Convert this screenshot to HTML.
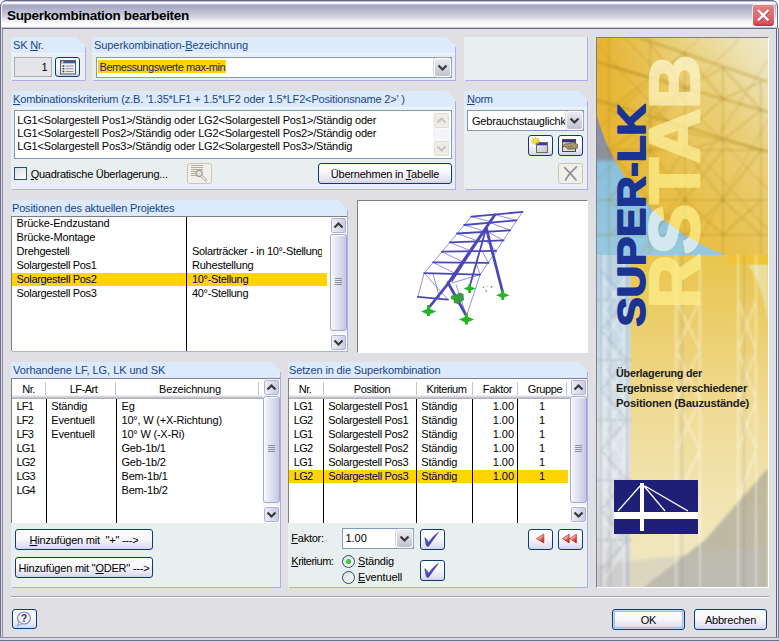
<!DOCTYPE html>
<html>
<head>
<meta charset="utf-8">
<title>Superkombination bearbeiten</title>
<style>
html,body{margin:0;padding:0;}
body{width:779px;height:641px;overflow:hidden;position:relative;background:#fff;font-family:"Liberation Sans",sans-serif;font-size:11px;color:#000;letter-spacing:-0.22px;}
*{box-sizing:border-box;}
.a{position:absolute;}
.t{white-space:nowrap;}
#win{position:absolute;left:0;top:0;width:779px;height:641px;background:#e0dfe3;overflow:hidden;}
#title{position:absolute;left:0;top:0;width:779px;height:29px;
 background:linear-gradient(to bottom,#5c5d7c 0,#5c5d7c 1px,#a0a1b8 1px,#ffffff 2.5px,#f2f2f7 3.5px,#c4c5d8 4.5px,#a6a7c2 5.5px,#a8a9c3 7px,#b8b9cc 10.5px,#c3c4d5 13.5px,#d1d2df 16.5px,#e4e4ec 19.5px,#f3f3f7 21.5px,#fbfbfd 23.5px,#ffffff 25px,#ffffff 27px,#c4c5d6 27.5px,#6c6d8c 28px,#6c6d8c 29px);}
#tt{left:7px;top:8px;font-weight:bold;font-size:13.5px;line-height:15px;color:#000;letter-spacing:-0.32px;white-space:nowrap;}
#close{position:absolute;left:753px;top:5px;width:21px;height:21px;border-radius:3px;background:linear-gradient(to bottom,#d0505a 0,#e8a090 1px,#e47a7c 2px,#df6c70 50%,#d6585e 85%,#b43040 100%);box-shadow:0 0 0 1px rgba(255,255,255,0.75);}
.bl{position:absolute;left:0;top:28px;width:3px;height:613px;background:linear-gradient(to right,#6e6f8a 0,#6e6f8a 1px,#d8d8e4 1px,#d8d8e4 2px,#8f90a8 2px,#8f90a8 3px);}
.br{position:absolute;left:776px;top:28px;width:3px;height:613px;background:linear-gradient(to right,#60617e 0,#60617e 1px,#e4e4ee 1px,#e4e4ee 2px,#7a7b96 2px,#7a7b96 3px);}
.bb{position:absolute;left:0;top:637px;width:779px;height:4px;background:linear-gradient(to top,#6e6f8a 0,#6e6f8a 1px,#d8d8e4 1px,#d8d8e4 3px,#8f90a8 3px,#8f90a8 4px);}
.grp{background:#e9efee;}
.gc{clip-path:polygon(0 0,calc(100% - 10px) 0,100% 10px,100% 100%,0 100%);}
.hd{background:#ddeafc;clip-path:polygon(0 0,calc(100% - 9px) 0,100% 9px,100% 100%,0 100%);}
.hdl{background:#f0f5fa;}
.hdt{color:#1a4684;line-height:17px;height:17px;white-space:nowrap;}
.gb{background:#adadf0;}
u{text-decoration:underline;}
.inp{background:#fff;border:1px solid #7f9db9;}
.btn{border:1px solid #0c3c78;border-radius:3px;background:linear-gradient(to bottom,#ffffff 0%,#f7f7fb 45%,#e4e2ef 85%,#d3cfe2 100%);text-align:center;white-space:nowrap;padding-top:1px;}
.dbtn{border-color:#c9c7ba;background:#f1f0ea;}
.lst{background:#fff;border-left:1px solid #808080;border-top:1px solid #808080;}
.sel{background:#ffd400;}
.seltx{color:#00007b;}
.vl{background:#000;}
.sb{background:#f4f4f9;}
.sbb{border:1px solid #fff;border-radius:3px;background:linear-gradient(to right,#f0f1fa,#c6c9e4);box-shadow:inset 0 0 0 1px #aeb1d0;}
.sbb.dis{background:#eeede5;border:1px solid #fbfbf8;box-shadow:inset 0 0 0 1px #e2e0d4;}
.thumb{border-radius:3px;background:linear-gradient(to right,#f8f8fd,#c4c7e4);border:1px solid #a3a7ca;box-shadow:inset 1px 1px 0 #fff;}
.cbb{border-radius:3px;border:1px solid #fff;background:linear-gradient(to bottom,#e9eaf2 0%,#d4d5e1 55%,#bfc0d0 100%);box-shadow:0 0 0 0.5px #b0b2c6;}
.chk{border:1px solid #1c5180;background:linear-gradient(135deg,#dcdcd7,#ffffff);}
.lh{background:linear-gradient(to bottom,#fff 0,#fff 16px,#eeeef3 16px,#eeeef3 17px,#dadae2 17px,#dadae2 18px,#c3c3ce 18px,#c3c3ce 19px,#b0b0be 19px,#b0b0be 20px);}
.hs{background:#c2c2d2;}
.rad{border-radius:50%;border:1px solid #1c5180;background:linear-gradient(135deg,#dcdcd7,#ffffff);}
.rad i{position:absolute;left:3px;top:3px;width:5px;height:5px;border-radius:50%;background:radial-gradient(circle at 40% 40%,#55d551,#21a121);}

</style>
</head>
<body>
<div id="win">
<div id="title"></div><div class="a" id="tt">Superkombination bearbeiten</div>
<div id="close"><svg width="21" height="21" viewBox="0 0 21 21" style="position:absolute;left:0;top:0"><path d="M5.500 5.500 L16 16 M16 5.500 L5.500 16" stroke="#5a2428" stroke-opacity="0.550" stroke-width="2.600"/><path d="M5 5 L15.500 15.500 M15.500 5 L5 15.500" stroke="#fff" stroke-width="2.300"/></svg></div>
<div class="bl"></div><div class="br"></div><div class="bb"></div>
<svg width="779" height="30" style="position:absolute;left:0;top:0"><path d="M0 0 H8 Q0 0 0 8 Z" fill="#fff"/><path d="M779 0 H770 Q778 0 778 8 V28 H779 Z" fill="#fff"/><path d="M0.500 28 V7 Q0.500 0.500 7 0.500 H771 Q777.500 0.500 777.500 7 V28" fill="none" stroke="#64658a" stroke-width="1"/><path d="M1.500 27 V7.500 Q1.500 2 7 2" fill="none" stroke="#fff" stroke-opacity="0.850" stroke-width="1"/><path d="M776.500 27 V7.500 Q776.500 2 771 2" fill="none" stroke="#fff" stroke-opacity="0.700" stroke-width="1"/></svg>
<div class="a grp gc" style="left:11px;top:37px;width:75px;height:44px;"></div>
<div class="a hd" style="left:11px;top:37px;width:74px;height:16px;"></div>
<div class="a hdl" style="left:11px;top:53px;width:74px;height:1px;"></div>
<div class="a hdt" style="left:13px;top:37px;letter-spacing:-0.18px;">SK <u>N</u>r.</div>
<div class="a gb" style="left:12px;top:80px;width:74px;height:1px;"></div>
<div class="a gb" style="left:85px;top:47px;width:1px;height:34px;"></div>
<div class="a " style="left:14px;top:57px;width:38px;height:20px;border:1px solid #adacb2;background:#e5e4e9;"></div>
<div class="a t " style="left:14px;top:60px;line-height:14px;height:14px;width:33.500px;text-align:right;">1</div>
<div class="a btn " style="left:55px;top:57px;width:25px;height:20px;line-height:18px;"><svg width="23" height="18" viewBox="0 0 23 18" style="position:absolute;left:0;top:0"><rect x="4.500" y="2.500" width="15" height="13.500" fill="#eeeef0" stroke="#5a5a5a"/><rect x="5" y="3" width="14" height="2.300" fill="#3c5c9c"/><rect x="5.500" y="3.300" width="1.800" height="1.500" fill="#fff"/><path d="M6.500 8h1.800M6.500 10.800h1.800M6.500 13.500h1.800" stroke="#2a3a6a" stroke-width="1.600"/><path d="M9.500 8h8M9.500 10.800h8M9.500 13.500h8" stroke="#8a92a6"/></svg></div>
<div class="a grp gc" style="left:92px;top:37px;width:364px;height:44px;"></div>
<div class="a hd" style="left:92px;top:37px;width:363px;height:16px;"></div>
<div class="a hdl" style="left:92px;top:53px;width:363px;height:1px;"></div>
<div class="a hdt" style="left:94px;top:37px;letter-spacing:-0.07px;">Superkombination-<u>B</u>ezeichnung</div>
<div class="a gb" style="left:93px;top:80px;width:363px;height:1px;"></div>
<div class="a gb" style="left:455px;top:47px;width:1px;height:34px;"></div>
<div class="a inp" style="left:96px;top:57px;width:356px;height:21px;"></div>
<div class="a cbb" style="left:434px;top:58px;width:17px;height:19px;"><svg width="15" height="17" style="position:absolute;left:0;top:0"><path d="M3.5 6.5 L7.5 10.5 L11.5 6.5" stroke="#383838" stroke-width="2.2" fill="none"/></svg></div>
<div class="a " style="left:98px;top:60px;width:128px;height:13px;background:#ffd400;"></div>
<div class="a t " style="left:99.5px;top:61px;line-height:13px;height:13px;letter-spacing:-0.44px;color:#1b1b8b;">Bemessungswerte max-min</div>
<div class="a grp" style="left:464px;top:37px;width:124px;height:44px;"></div>
<div class="a gb" style="left:465px;top:80px;width:123px;height:1px;"></div>
<div class="a gb" style="left:587px;top:37px;width:1px;height:44px;"></div>
<div class="a grp gc" style="left:11px;top:91px;width:445px;height:99px;"></div>
<div class="a hd" style="left:11px;top:91px;width:444px;height:16px;"></div>
<div class="a hdl" style="left:11px;top:107px;width:444px;height:1px;"></div>
<div class="a hdt" style="left:13px;top:91px;letter-spacing:-0.165px;"><u>K</u>ombinationskriterium (z.B. '1.35*LF1 + 1.5*LF2 oder 1.5*LF2&lt;Positionsname 2&gt;' )</div>
<div class="a gb" style="left:12px;top:189px;width:444px;height:1px;"></div>
<div class="a gb" style="left:455px;top:101px;width:1px;height:89px;"></div>
<div class="a inp" style="left:14px;top:110px;width:438px;height:49px;"></div>
<div class="a t " style="left:17.3px;top:113.6px;line-height:13px;height:13px;letter-spacing:-0.19px;">LG1&lt;Solargestell Pos1&gt;/Ständig oder LG2&lt;Solargestell Pos1&gt;/Ständig oder</div>
<div class="a t " style="left:17.3px;top:126.6px;line-height:13px;height:13px;letter-spacing:-0.19px;">LG1&lt;Solargestell Pos2&gt;/Ständig oder LG2&lt;Solargestell Pos2&gt;/Ständig oder</div>
<div class="a t " style="left:17.3px;top:139.6px;line-height:13px;height:13px;letter-spacing:-0.19px;">LG1&lt;Solargestell Pos3&gt;/Ständig oder LG2&lt;Solargestell Pos3&gt;/Ständig</div>
<div class="a sb" style="left:433px;top:112px;width:17px;height:45px;"></div>
<div class="a sbb dis" style="left:433px;top:112px;width:17px;height:17px;"><svg width="17" height="17" style="position:absolute;left:-1px;top:-1px"><path d="M4.5 10.5 L8.5 6.5 L12.5 10.5" stroke="#c9c7ba" stroke-width="2.2" fill="none"/></svg></div>
<div class="a sbb dis" style="left:433px;top:140px;width:17px;height:17px;"><svg width="17" height="17" style="position:absolute;left:-1px;top:-1px"><path d="M4.5 6.5 L8.5 10.5 L12.5 6.5" stroke="#c9c7ba" stroke-width="2.2" fill="none"/></svg></div>
<div class="a chk" style="left:14px;top:167px;width:13px;height:13px;"></div>
<div class="a t " style="left:30.7px;top:167px;line-height:14px;height:14px;letter-spacing:-0.26px;"><u>Q</u>uadratische Überlagerung...</div>
<div class="a btn dbtn" style="left:187px;top:163px;width:25px;height:21px;line-height:19px;"><svg width="23" height="19" viewBox="0 0 23 19" style="position:absolute;left:0;top:0"><path d="M3 1.500h12M3 3.500h12M3 5.500h12M3 7.500h5M3 9.500h4.500M3 11.500h5" stroke="#b3b09e"/><circle cx="11.200" cy="9.400" r="3.100" fill="#e4e4e0" stroke="#a4a49c" stroke-width="1.300"/><path d="M13.600 12 L17.800 16" stroke="#a8a8a4" stroke-width="2.600" stroke-linecap="round"/><path d="M13.800 12.200 L17.600 15.800" stroke="#fafafa" stroke-width="1.100" stroke-linecap="round"/></svg></div>
<div class="a btn " style="left:318px;top:163px;width:134px;height:21px;line-height:19px;">Übernehmen in <u>T</u>abelle</div>
<div class="a grp gc" style="left:464px;top:91px;width:124px;height:99px;"></div>
<div class="a hd" style="left:464px;top:91px;width:123px;height:16px;"></div>
<div class="a hdl" style="left:464px;top:107px;width:123px;height:1px;"></div>
<div class="a hdt" style="left:467px;top:91px;letter-spacing:-0.3px;"><u>N</u>orm</div>
<div class="a gb" style="left:465px;top:189px;width:123px;height:1px;"></div>
<div class="a gb" style="left:587px;top:101px;width:1px;height:89px;"></div>
<div class="a inp" style="left:467px;top:110px;width:117px;height:21px;"></div>
<div class="a cbb" style="left:566px;top:111px;width:17px;height:19px;"><svg width="15" height="17" style="position:absolute;left:0;top:0"><path d="M3.5 6.5 L7.5 10.5 L11.5 6.5" stroke="#383838" stroke-width="2.2" fill="none"/></svg></div>
<div class="a t" style="left:472px;top:115px;width:93px;height:13px;line-height:13px;overflow:hidden;letter-spacing:-0.19px;">Gebrauchstauglichkeit</div>
<div class="a btn " style="left:528px;top:135px;width:25px;height:21px;line-height:19px;"><svg width="23" height="19" viewBox="0 0 23 19" style="position:absolute;left:0;top:0"><defs><linearGradient id="wg" x1="0" y1="0" x2="1" y2="1"><stop offset="0" stop-color="#f0f0f0"/><stop offset="1" stop-color="#c4c4c4"/></linearGradient></defs><rect x="7.5" y="6.5" width="11" height="10" fill="url(#wg)" stroke="#6a6a6a"/><rect x="8" y="7" width="10" height="2.3" fill="#3838b4"/><path d="M6.5 1.2 L7.4 3.6 L9.6 2.2 L8.6 4.4 L11 5 L8.6 5.800 L9.6 8 L7.4 6.600 L6.5 9 L5.600 6.600 L3.400 8 L4.400 5.800 L2 5 L4.400 4.400 L3.400 2.200 L5.600 3.600 Z" fill="#f6e23a" stroke="#d8b400" stroke-width="0.5"/></svg></div>
<div class="a btn " style="left:558px;top:135px;width:25px;height:21px;line-height:19px;"><svg width="23" height="19" viewBox="0 0 23 19" style="position:absolute;left:0;top:0"><rect x="3.5" y="3.5" width="13" height="12" fill="#dcdcdc" stroke="#4a4a4a"/><rect x="4" y="4" width="12" height="2.300" fill="#30308c"/><path d="M4 9.500 C5 8,7 7.500,9 7.800 C11 6.500,14 6.300,16 7 L18.500 8.500 L18.500 12 L15 13 L10 13.200 C8 13,7.500 12,7.500 11 L4.500 10.800 Z" fill="#a89868" stroke="#5a5030" stroke-width="0.700"/><path d="M9 10.500 L12 12.500 M11 9.500 L14 11.500" stroke="#6a6040" stroke-width="0.600"/></svg></div>
<div class="a btn dbtn" style="left:558px;top:163px;width:25px;height:21px;line-height:19px;"><svg width="23" height="19" viewBox="0 0 23 19" style="position:absolute;left:0;top:0"><path d="M5.500 3.500 C9 7,13 11,17 16 M17.500 3 C13 7,9 11,6.500 16" stroke="#a2a2a8" stroke-width="1.900" fill="none" stroke-linecap="round"/><path d="M6 4 C9 7,13 11,16.500 15.500 M17 3.500 C13 7,9 11,7 15.500" stroke="#7c7c86" stroke-width="0.700" fill="none"/></svg></div>
<div class="a grp gc" style="left:11px;top:200px;width:337px;height:152px;"></div>
<div class="a hd" style="left:11px;top:200px;width:336px;height:16px;"></div>
<div class="a hdl" style="left:11px;top:216px;width:336px;height:1px;"></div>
<div class="a hdt" style="left:12px;top:200px;letter-spacing:-0.17px;">Positionen des aktuellen Projektes</div>
<div class="a gb" style="left:12px;top:351px;width:336px;height:1px;"></div>
<div class="a gb" style="left:347px;top:210px;width:1px;height:142px;"></div>
<div class="a lst" style="left:11px;top:216px;width:336px;height:135px;"></div>
<div class="a sel" style="left:12px;top:273px;width:315px;height:13px;"></div>
<div class="a t " style="left:16.5px;top:217px;line-height:13px;height:13px;letter-spacing:-0.18px;">Brücke-Endzustand</div>
<div class="a t " style="left:16.5px;top:231px;line-height:13px;height:13px;letter-spacing:-0.14px;">Brücke-Montage</div>
<div class="a t " style="left:16.5px;top:245px;line-height:13px;height:13px;letter-spacing:-0.24px;">Drehgestell</div>
<div class="a t " style="left:16.5px;top:259px;line-height:13px;height:13px;letter-spacing:-0.33px;">Solargestell Pos1</div>
<div class="a t seltx" style="left:16.5px;top:273px;line-height:13px;height:13px;letter-spacing:-0.33px;">Solargestell Pos2</div>
<div class="a t " style="left:16.5px;top:287px;line-height:13px;height:13px;letter-spacing:-0.33px;">Solargestell Pos3</div>
<div class="a vl" style="left:186px;top:217px;width:1px;height:134px;"></div>
<div class="a" style="left:192px;top:217px;width:130px;height:134px;overflow:hidden;">
<div class="a t " style="left:0;top:28px;line-height:13px;letter-spacing:-0.32px;">Solarträcker - in 10°-Stellung</div>
<div class="a t " style="left:0;top:42px;line-height:13px;letter-spacing:-0.23px;">Ruhestellung</div>
<div class="a t seltx" style="left:0;top:56px;line-height:13px;letter-spacing:-0.32px;">10°-Stellung</div>
<div class="a t " style="left:0;top:70px;line-height:13px;letter-spacing:-0.32px;">40°-Stellung</div>
</div>
<div class="a sb" style="left:330px;top:217px;width:17px;height:134px;"></div>
<div class="a sbb" style="left:330px;top:217px;width:17px;height:17px;"><svg width="17" height="17" style="position:absolute;left:-1px;top:-1px"><path d="M4.5 10.5 L8.5 6.5 L12.5 10.5" stroke="#383838" stroke-width="2.2" fill="none"/></svg></div>
<div class="a sbb" style="left:330px;top:334px;width:17px;height:17px;"><svg width="17" height="17" style="position:absolute;left:-1px;top:-1px"><path d="M4.5 6.5 L8.5 10.5 L12.5 6.5" stroke="#383838" stroke-width="2.2" fill="none"/></svg></div>
<div class="a thumb" style="left:330px;top:234px;width:17px;height:97px;"><svg width="15" height="8" style="position:absolute;left:0;top:43px"><path d="M4 0.5h7M4 2.5h7M4 4.5h7M4 6.5h7" stroke="#8d8ea3"/></svg></div>
<div class="a " style="left:357px;top:200px;width:231px;height:153px;background:#fff;border-top:1px solid #808080;border-left:1px solid #808080;border-right:1px solid #fff;border-bottom:1px solid #fff;"><svg width="229" height="151" viewBox="358 201 229 151" style="position:absolute;left:0;top:0;display:block">
 <g stroke="#4a47b8" fill="none" stroke-linecap="round">
  <g stroke-width="0.7" stroke-opacity="0.85">
   <path d="M471.3 216.6 L424.2 273.1 L417.8 296.8 M522.5 211.9 L480.1 274.6 L466.5 316"/>
   <path d="M471.3 216.6 L490 221.5 M464.2 225 L484 231 M457 233.500 L478 241 M449.800 242.300 L471 251 M442 251.700 L464 262.500 M433.100 262.300 L456 274"/>
   <path d="M494.700 214.500 L516.300 220.400 M490 222.500 L510.200 230.400 M486 231 L503.500 240.400 M486 241 L496.300 250.800 M482 251 L488.600 262.800 M476 262.600 L480.100 274.600"/>
   <path d="M424.200 273.100 L448 299.700 M433 274 L440 299 M480.100 274.600 L452 283 M456.200 285 L466.500 316"/>
  </g>
  <g stroke-width="1.800">
   <path d="M471.300 216.600 L522.500 211.900 M464.200 225 L516.300 220.400 M457 233.500 L510.200 230.400 M449.800 242.300 L503.500 240.400 M442 251.700 L496.300 250.800 M433.100 262.300 L488.600 262.800 M424.200 273.100 L480.100 274.600"/>
   <path d="M417.800 296.800 L448 299.700"/>
   <path d="M486.300 228.100 L469.500 287"/>
  </g>
  <g stroke-width="2.800">
   <path d="M494.700 215 L447 285 L428.600 308"/>
   <path d="M486.300 228.100 L502.600 292"/>
   <path d="M448 282.700 L466.500 316"/>
  </g>
  <path d="M486.300 228.100 L452 281" stroke-width="1.600"/>
 </g>
 <g fill="#22b522" stroke="none">
  <path d="M421 311.500 L428.600 308.300 L436.200 311.500 L428.600 314.700 Z M427.100 305 h3 v11 h-3 Z"/>
  <path d="M458.900 319.500 L466.500 316.300 L474.100 319.500 L466.500 322.700 Z M465 313.500 h3 v11 h-3 Z"/>
  <path d="M463.600 288.600 L469.600 286 L475.600 288.600 L469.600 291.200 Z M468.300 284 h2.600 v9 h-2.600 Z"/>
  <path d="M496 295.300 L502.800 292.500 L509.600 295.300 L502.800 298.100 Z M501.400 290 h2.800 v10 h-2.800 Z"/>
 </g>
 <path d="M453 296 L460 292.500 L463.500 294 L464 300 L458 304 L454 303 Z" fill="#3c9a48"/>
 <circle cx="453" cy="297.500" r="2.200" fill="#22b522"/>
 <circle cx="483.500" cy="287.300" r="0.800" fill="#30b030"/><circle cx="491.500" cy="286.800" r="0.900" fill="#e05030"/><circle cx="487" cy="286.500" r="0.700" fill="#c8c040"/><circle cx="486.300" cy="291" r="0.800" fill="#3060e0"/>
</svg>
</div>
<div class="a grp gc" style="left:11px;top:362px;width:270px;height:226px;"></div>
<div class="a hd" style="left:11px;top:362px;width:269px;height:16px;"></div>
<div class="a hdl" style="left:11px;top:378px;width:269px;height:1px;"></div>
<div class="a hdt" style="left:13px;top:362px;letter-spacing:-0.04px;">Vorhandene LF, LG, LK und SK</div>
<div class="a gb" style="left:12px;top:587px;width:269px;height:1px;"></div>
<div class="a gb" style="left:280px;top:372px;width:1px;height:216px;"></div>
<div class="a lst" style="left:11px;top:378px;width:269px;height:145px;"></div>
<div class="a lh" style="left:12px;top:379px;width:251px;height:20px;"></div>
<div class="a t" style="left:12px;top:382px;width:33px;text-align:center;line-height:14px;letter-spacing:-0.5px;">Nr.</div>
<div class="a hs" style="left:45px;top:382px;width:1px;height:13px;"></div>
<div class="a t" style="left:49px;top:382px;width:69px;text-align:center;line-height:14px;letter-spacing:-0.5px;">LF-Art</div>
<div class="a hs" style="left:115px;top:382px;width:1px;height:13px;"></div>
<div class="a t" style="left:119px;top:382px;width:142px;text-align:center;line-height:14px;letter-spacing:-0.15px;">Bezeichnung</div>
<div class="a hs" style="left:258px;top:382px;width:1px;height:13px;"></div>
<div class="a vl" style="left:46px;top:399px;width:1px;height:124px;"></div>
<div class="a vl" style="left:116px;top:399px;width:1px;height:124px;"></div>
<div class="a t " style="left:16.5px;top:400px;line-height:13px;height:13px;letter-spacing:-0.8px;">LF1</div>
<div class="a t " style="left:51.3px;top:400px;line-height:13px;height:13px;letter-spacing:-0.2px;">Ständig</div>
<div class="a t " style="left:121.5px;top:400px;line-height:13px;height:13px;letter-spacing:-0.2px;">Eg</div>
<div class="a t " style="left:16.5px;top:414px;line-height:13px;height:13px;letter-spacing:-0.8px;">LF2</div>
<div class="a t " style="left:51.3px;top:414px;line-height:13px;height:13px;letter-spacing:-0.2px;">Eventuell</div>
<div class="a t " style="left:121.5px;top:414px;line-height:13px;height:13px;letter-spacing:-0.2px;">10°, W (+X-Richtung)</div>
<div class="a t " style="left:16.5px;top:428px;line-height:13px;height:13px;letter-spacing:-0.8px;">LF3</div>
<div class="a t " style="left:51.3px;top:428px;line-height:13px;height:13px;letter-spacing:-0.2px;">Eventuell</div>
<div class="a t " style="left:121.5px;top:428px;line-height:13px;height:13px;letter-spacing:-0.2px;">10° W (-X-Ri)</div>
<div class="a t " style="left:16.5px;top:442px;line-height:13px;height:13px;letter-spacing:-0.8px;">LG1</div>
<div class="a t " style="left:121.5px;top:442px;line-height:13px;height:13px;letter-spacing:-0.2px;">Geb-1b/1</div>
<div class="a t " style="left:16.5px;top:456px;line-height:13px;height:13px;letter-spacing:-0.8px;">LG2</div>
<div class="a t " style="left:121.5px;top:456px;line-height:13px;height:13px;letter-spacing:-0.2px;">Geb-1b/2</div>
<div class="a t " style="left:16.5px;top:470px;line-height:13px;height:13px;letter-spacing:-0.8px;">LG3</div>
<div class="a t " style="left:121.5px;top:470px;line-height:13px;height:13px;letter-spacing:-0.2px;">Bem-1b/1</div>
<div class="a t " style="left:16.5px;top:484px;line-height:13px;height:13px;letter-spacing:-0.8px;">LG4</div>
<div class="a t " style="left:121.5px;top:484px;line-height:13px;height:13px;letter-spacing:-0.2px;">Bem-1b/2</div>
<div class="a sb" style="left:263px;top:379px;width:17px;height:144px;"></div>
<div class="a sbb" style="left:263px;top:379px;width:17px;height:17px;"><svg width="17" height="17" style="position:absolute;left:-1px;top:-1px"><path d="M4.5 10.5 L8.5 6.5 L12.5 10.5" stroke="#383838" stroke-width="2.2" fill="none"/></svg></div>
<div class="a sbb" style="left:263px;top:506px;width:17px;height:17px;"><svg width="17" height="17" style="position:absolute;left:-1px;top:-1px"><path d="M4.5 6.5 L8.5 10.5 L12.5 6.5" stroke="#383838" stroke-width="2.2" fill="none"/></svg></div>
<div class="a thumb" style="left:263px;top:396px;width:17px;height:107px;"><svg width="15" height="8" style="position:absolute;left:0;top:48px"><path d="M4 0.5h7M4 2.5h7M4 4.5h7M4 6.5h7" stroke="#8d8ea3"/></svg></div>
<div class="a btn " style="left:15px;top:529px;width:138px;height:21px;line-height:19px;"><u>H</u>inzufügen mit &nbsp;"+" ---&gt;</div>
<div class="a btn " style="left:15px;top:557px;width:138px;height:21px;line-height:19px;">Hinzufügen mit "<u>O</u>DER" ---&gt;</div>
<div class="a grp gc" style="left:288px;top:362px;width:300px;height:226px;"></div>
<div class="a hd" style="left:288px;top:362px;width:299px;height:16px;"></div>
<div class="a hdl" style="left:288px;top:378px;width:299px;height:1px;"></div>
<div class="a hdt" style="left:289px;top:362px;letter-spacing:-0.13px;">Setzen in die Superkombination</div>
<div class="a gb" style="left:289px;top:587px;width:299px;height:1px;"></div>
<div class="a gb" style="left:587px;top:372px;width:1px;height:216px;"></div>
<div class="a lst" style="left:288px;top:378px;width:299px;height:145px;"></div>
<div class="a lh" style="left:289px;top:379px;width:281px;height:20px;"></div>
<div class="a t" style="left:288px;top:382px;width:34px;text-align:center;line-height:14px;letter-spacing:-0.5px;">Nr.</div>
<div class="a hs" style="left:323px;top:382px;width:1px;height:13px;"></div>
<div class="a t" style="left:326px;top:382px;width:92px;text-align:center;line-height:14px;letter-spacing:-0.3px;">Position</div>
<div class="a hs" style="left:416px;top:382px;width:1px;height:13px;"></div>
<div class="a t" style="left:419px;top:382px;width:55px;text-align:center;line-height:14px;letter-spacing:-0.45px;">Kriterium</div>
<div class="a hs" style="left:472px;top:382px;width:1px;height:13px;"></div>
<div class="a t" style="left:475.5px;top:382px;width:44px;text-align:center;line-height:14px;letter-spacing:-0.32px;">Faktor</div>
<div class="a hs" style="left:517px;top:382px;width:1px;height:13px;"></div>
<div class="a t" style="left:521px;top:382px;width:48px;text-align:center;line-height:14px;letter-spacing:-0.4px;">Gruppe</div>
<div class="a hs" style="left:566px;top:382px;width:1px;height:13px;"></div>
<div class="a sel" style="left:289px;top:470px;width:279px;height:13px;"></div>
<div class="a vl" style="left:323px;top:399px;width:1px;height:124px;"></div>
<div class="a vl" style="left:416px;top:399px;width:1px;height:124px;"></div>
<div class="a vl" style="left:472px;top:399px;width:1px;height:124px;"></div>
<div class="a vl" style="left:517px;top:399px;width:1px;height:124px;"></div>
<div class="a t " style="left:293.8px;top:400px;line-height:13px;height:13px;letter-spacing:-0.7px;">LG1</div>
<div class="a t " style="left:328.3px;top:400px;line-height:13px;height:13px;letter-spacing:-0.33px;">Solargestell Pos1</div>
<div class="a t " style="left:421.3px;top:400px;line-height:13px;height:13px;letter-spacing:-0.22px;">Ständig</div>
<div class="a t " style="left:480px;top:400px;line-height:13px;height:13px;letter-spacing:-0.04px;width:34px;text-align:right;">1.00</div>
<div class="a t " style="left:532px;top:400px;line-height:13px;height:13px;width:20px;text-align:center;">1</div>
<div class="a t " style="left:293.8px;top:414px;line-height:13px;height:13px;letter-spacing:-0.7px;">LG2</div>
<div class="a t " style="left:328.3px;top:414px;line-height:13px;height:13px;letter-spacing:-0.33px;">Solargestell Pos1</div>
<div class="a t " style="left:421.3px;top:414px;line-height:13px;height:13px;letter-spacing:-0.22px;">Ständig</div>
<div class="a t " style="left:480px;top:414px;line-height:13px;height:13px;letter-spacing:-0.04px;width:34px;text-align:right;">1.00</div>
<div class="a t " style="left:532px;top:414px;line-height:13px;height:13px;width:20px;text-align:center;">1</div>
<div class="a t " style="left:293.8px;top:428px;line-height:13px;height:13px;letter-spacing:-0.7px;">LG1</div>
<div class="a t " style="left:328.3px;top:428px;line-height:13px;height:13px;letter-spacing:-0.33px;">Solargestell Pos2</div>
<div class="a t " style="left:421.3px;top:428px;line-height:13px;height:13px;letter-spacing:-0.22px;">Ständig</div>
<div class="a t " style="left:480px;top:428px;line-height:13px;height:13px;letter-spacing:-0.04px;width:34px;text-align:right;">1.00</div>
<div class="a t " style="left:532px;top:428px;line-height:13px;height:13px;width:20px;text-align:center;">1</div>
<div class="a t " style="left:293.8px;top:442px;line-height:13px;height:13px;letter-spacing:-0.7px;">LG2</div>
<div class="a t " style="left:328.3px;top:442px;line-height:13px;height:13px;letter-spacing:-0.33px;">Solargestell Pos2</div>
<div class="a t " style="left:421.3px;top:442px;line-height:13px;height:13px;letter-spacing:-0.22px;">Ständig</div>
<div class="a t " style="left:480px;top:442px;line-height:13px;height:13px;letter-spacing:-0.04px;width:34px;text-align:right;">1.00</div>
<div class="a t " style="left:532px;top:442px;line-height:13px;height:13px;width:20px;text-align:center;">1</div>
<div class="a t " style="left:293.8px;top:456px;line-height:13px;height:13px;letter-spacing:-0.7px;">LG1</div>
<div class="a t " style="left:328.3px;top:456px;line-height:13px;height:13px;letter-spacing:-0.33px;">Solargestell Pos3</div>
<div class="a t " style="left:421.3px;top:456px;line-height:13px;height:13px;letter-spacing:-0.22px;">Ständig</div>
<div class="a t " style="left:480px;top:456px;line-height:13px;height:13px;letter-spacing:-0.04px;width:34px;text-align:right;">1.00</div>
<div class="a t " style="left:532px;top:456px;line-height:13px;height:13px;width:20px;text-align:center;">1</div>
<div class="a t seltx" style="left:293.8px;top:470px;line-height:13px;height:13px;letter-spacing:-0.7px;">LG2</div>
<div class="a t seltx" style="left:328.3px;top:470px;line-height:13px;height:13px;letter-spacing:-0.33px;">Solargestell Pos3</div>
<div class="a t seltx" style="left:421.3px;top:470px;line-height:13px;height:13px;letter-spacing:-0.22px;">Ständig</div>
<div class="a t seltx" style="left:480px;top:470px;line-height:13px;height:13px;letter-spacing:-0.04px;width:34px;text-align:right;">1.00</div>
<div class="a t seltx" style="left:532px;top:470px;line-height:13px;height:13px;width:20px;text-align:center;">1</div>
<div class="a sb" style="left:570px;top:379px;width:17px;height:144px;"></div>
<div class="a sbb" style="left:570px;top:379px;width:17px;height:17px;"><svg width="17" height="17" style="position:absolute;left:-1px;top:-1px"><path d="M4.5 10.5 L8.5 6.5 L12.5 10.5" stroke="#383838" stroke-width="2.2" fill="none"/></svg></div>
<div class="a sbb" style="left:570px;top:506px;width:17px;height:17px;"><svg width="17" height="17" style="position:absolute;left:-1px;top:-1px"><path d="M4.5 6.5 L8.5 10.5 L12.5 6.5" stroke="#383838" stroke-width="2.2" fill="none"/></svg></div>
<div class="a thumb" style="left:570px;top:396px;width:17px;height:107px;"><svg width="15" height="8" style="position:absolute;left:0;top:48px"><path d="M4 0.5h7M4 2.5h7M4 4.5h7M4 6.5h7" stroke="#8d8ea3"/></svg></div>
<div class="a t " style="left:291.3px;top:531px;line-height:14px;height:14px;letter-spacing:-0.25px;"><u>F</u>aktor:</div>
<div class="a inp" style="left:342px;top:528px;width:72px;height:21px;"></div>
<div class="a cbb" style="left:396px;top:529px;width:17px;height:19px;"><svg width="15" height="17" style="position:absolute;left:0;top:0"><path d="M3.5 6.5 L7.5 10.5 L11.5 6.5" stroke="#383838" stroke-width="2.2" fill="none"/></svg></div>
<div class="a t " style="left:345.5px;top:531px;line-height:14px;height:14px;letter-spacing:-0.04px;">1.00</div>
<div class="a btn " style="left:420px;top:529px;width:25px;height:21px;line-height:19px;"><svg width="23" height="19" viewBox="0 0 23 19" style="position:absolute;left:0;top:0"><defs><linearGradient id="ck" x1="0" y1="0" x2="1" y2="1"><stop offset="0" stop-color="#7f86e6"/><stop offset="0.5" stop-color="#4a4cc4"/><stop offset="1" stop-color="#1c1c78"/></linearGradient></defs><path d="M3.800 7.600 C5.200 8.200,6.800 10.500,7.600 12.600 C10 8.500,13.500 4.800,17.500 2.200 C14.500 6.500,10.500 12,7.600 16.200 C6.800 16.800,5.800 16.500,5.300 15.500 C4.600 13,4 10,3.800 7.600 Z" fill="url(#ck)" stroke="#23237c" stroke-width="0.400"/></svg></div>
<div class="a t " style="left:291.3px;top:554px;line-height:14px;height:14px;letter-spacing:-0.5px;"><u>K</u>riterium:</div>
<div class="a rad" style="left:342px;top:555px;width:13px;height:13px;"><i></i></div>
<div class="a t " style="left:358px;top:554px;line-height:14px;height:14px;letter-spacing:-0.2px;"><u>S</u>tändig</div>
<div class="a rad" style="left:342px;top:571px;width:13px;height:13px;"></div>
<div class="a t " style="left:358px;top:570px;line-height:14px;height:14px;letter-spacing:-0.14px;"><u>E</u>ventuell</div>
<div class="a btn " style="left:420px;top:560px;width:25px;height:21px;line-height:19px;"><svg width="23" height="19" viewBox="0 0 23 19" style="position:absolute;left:0;top:0"><defs><linearGradient id="ck" x1="0" y1="0" x2="1" y2="1"><stop offset="0" stop-color="#7f86e6"/><stop offset="0.5" stop-color="#4a4cc4"/><stop offset="1" stop-color="#1c1c78"/></linearGradient></defs><path d="M3.800 7.600 C5.200 8.200,6.800 10.500,7.600 12.600 C10 8.500,13.500 4.800,17.500 2.200 C14.500 6.500,10.500 12,7.600 16.200 C6.800 16.800,5.800 16.500,5.300 15.500 C4.600 13,4 10,3.800 7.600 Z" fill="url(#ck)" stroke="#23237c" stroke-width="0.400"/></svg></div>
<div class="a btn " style="left:528px;top:529px;width:25px;height:21px;line-height:19px;"><svg width="23" height="19" viewBox="0 0 23 19" style="position:absolute;left:0;top:0"><defs><linearGradient id="tg" x1="0" y1="0" x2="0.6" y2="1"><stop offset="0" stop-color="#e86868"/><stop offset="0.38" stop-color="#fde0d8"/><stop offset="0.62" stop-color="#ee7468"/><stop offset="1" stop-color="#b42828"/></linearGradient></defs><path d="M14.8 4.100 L7.4 8.600 L14.8 12.900 Z" fill="url(#tg)" stroke="#a03024" stroke-width="0.700" stroke-linejoin="round"/></svg></div>
<div class="a btn " style="left:558px;top:529px;width:25px;height:21px;line-height:19px;"><svg width="23" height="19" viewBox="0 0 23 19" style="position:absolute;left:0;top:0"><defs><linearGradient id="tg" x1="0" y1="0" x2="0.6" y2="1"><stop offset="0" stop-color="#e86868"/><stop offset="0.38" stop-color="#fde0d8"/><stop offset="0.62" stop-color="#ee7468"/><stop offset="1" stop-color="#b42828"/></linearGradient></defs><path d="M10.2 4.100 L3.4 8.600 L10.2 12.900 Z" fill="url(#tg)" stroke="#a03024" stroke-width="0.700" stroke-linejoin="round"/><path d="M17.4 4.100 L10.6 8.600 L17.4 12.900 Z" fill="url(#tg)" stroke="#a03024" stroke-width="0.700" stroke-linejoin="round"/></svg></div>
<div class="a " style="left:596px;top:37px;width:173px;height:551px;overflow:hidden;border-top:1px solid #7d7d8c;border-left:1px solid #7d7d8c;border-right:1px solid #fff;border-bottom:1px solid #fff;"><svg width="171" height="550" viewBox="597 38 171 550" style="position:absolute;left:0;top:0;display:block">
 <defs>
  <linearGradient id="gGold" x1="0" y1="1" x2="1" y2="0"><stop offset="0" stop-color="#e8bc3a"/><stop offset="0.4" stop-color="#e8c04a"/><stop offset="0.72" stop-color="#ead07a"/><stop offset="0.9" stop-color="#ece2b4"/><stop offset="1" stop-color="#eee8c8"/></linearGradient>
  <linearGradient id="gGoldL" x1="0" y1="0" x2="1" y2="0"><stop offset="0" stop-color="#e6b22e" stop-opacity="0.9"/><stop offset="0.45" stop-color="#e6b432" stop-opacity="0"/></linearGradient>
  <linearGradient id="gLow" x1="0" y1="0" x2="0" y2="1"><stop offset="0" stop-color="#e8c54c"/><stop offset="0.25" stop-color="#ecd072"/><stop offset="0.5" stop-color="#f0dc98"/><stop offset="0.8" stop-color="#f2e6b8"/><stop offset="1" stop-color="#eee6c2"/></linearGradient>
  <linearGradient id="gLeft" x1="0" y1="0" x2="0" y2="1"><stop offset="0" stop-color="#b8d2e4"/><stop offset="0.25" stop-color="#c8dae6"/><stop offset="0.6" stop-color="#dde2e6"/><stop offset="1" stop-color="#d6d6d6"/></linearGradient>
  <linearGradient id="gBlue" x1="0" y1="0" x2="0" y2="1"><stop offset="0" stop-color="#8e8f9e"/><stop offset="0.3" stop-color="#8c92a4"/><stop offset="0.335" stop-color="#88c0de"/><stop offset="1" stop-color="#96c8e2"/></linearGradient>
  <linearGradient id="gTx" gradientUnits="userSpaceOnUse" x1="0" y1="0" x2="254" y2="0"><stop offset="0" stop-color="#fff08c"/><stop offset="0.55" stop-color="#fff08c"/><stop offset="0.85" stop-color="#fff6c4"/><stop offset="1" stop-color="#fffad8"/></linearGradient>
  <clipPath id="cTop"><rect x="597" y="38" width="171" height="217"/></clipPath>
  <clipPath id="cBlue"><path d="M597 116 A205.100 205.100 0 0 0 727.500 255.600 L597 255.600 Z"/></clipPath>
  <clipPath id="cAll"><rect x="597" y="38" width="171" height="550"/></clipPath>
  <filter id="bl" x="-5%" y="-5%" width="110%" height="110%"><feGaussianBlur stdDeviation="0.9"/></filter>
  <filter id="bl2" x="-5%" y="-5%" width="110%" height="110%"><feGaussianBlur stdDeviation="1.4"/></filter>
 </defs>
 <g clip-path="url(#cAll)">
 <rect x="597" y="38" width="171" height="550" fill="#efe7c4"/>
 <!-- lower section -->
 <rect x="597" y="255" width="34" height="333" fill="url(#gLeft)"/>
 <rect x="630.500" y="255" width="138" height="333" fill="url(#gLow)"/>
 <path d="M748 264 Q762 285 768 322 L768 264 Z" fill="#eade9c" filter="url(#bl)"/>
 <rect x="727" y="255.500" width="41" height="9" fill="#f0c436"/>
 <!-- shadow lower right -->
 <g filter="url(#bl2)">
 <path d="M768 468 L705 540 L640 590 L768 590 Z" fill="#8e8e8e" opacity="0.5"/>
 <path d="M597 565 L768 545 L768 590 L597 590 Z" fill="#bdbdbd" opacity="0.4"/>
 </g>
 <!-- top section -->
 <rect x="597" y="38" width="171" height="217" fill="url(#gGold)"/>
 <rect x="597" y="38" width="171" height="217" fill="url(#gGoldL)"/>
 <g clip-path="url(#cTop)">
  <path d="M597 116 A205.100 205.100 0 0 0 727.500 255.600 L597 256 Z" fill="url(#gBlue)"/>
 </g>
 <!-- scaffolding top -->
 <g stroke="#9a7414" fill="none" clip-path="url(#cTop)" filter="url(#bl)">
  <g stroke-opacity="0.26" stroke-width="3">
   <path d="M640 38 L768 82 M597 62 L768 112 M597 100 L768 152"/>
  </g>
  <g stroke-opacity="0.2" stroke-width="2">
   <path d="M609 38 L609 255 M650 40 L650 255 M685 52 L685 255 M723 66 L723 255 M761 80 L761 255"/>
   <path d="M597 150 L768 150 M597 200 L768 200 M597 235 L768 235"/>
   <path d="M609 66 L650 78 L609 110 L650 122 L609 150 L650 200 L609 235 M650 78 L609 110 M650 122 L609 150 M650 150 L609 200 L650 235"/>
   <path d="M650 44 L685 88 L650 110 L685 132 L650 150 L685 200 L650 235 M685 54 L650 78 M685 88 L650 122 M685 150 L650 200 L685 235"/>
   <path d="M685 54 L723 99 L685 132 L723 140 L685 150 L723 200 L685 235 M723 68 L685 88 M723 99 L685 132 M723 150 L685 200 L723 235"/>
   <path d="M723 68 L761 110 L723 140 L761 150 L723 200 L761 235 M761 82 L723 99 M761 110 L723 140 M761 150 L723 200 M761 200 L723 235"/>
  </g>
  <g stroke-opacity="0.16" stroke-width="1.500">
   <path d="M597 45 L768 230 M625 38 L768 190 M768 60 L640 255 M768 120 L690 255 M597 130 L700 38 M597 180 L740 38"/>
  </g>
 </g>
 <!-- scaffolding lower -->
 <g filter="url(#bl)">
 <g stroke="#ffffff" stroke-opacity="0.4" stroke-width="2" fill="none">
  <path d="M604 255 L604 588 M624 255 L624 588 M604 280 L624 310 L604 340 L624 370 L604 400 L624 430 L604 460 L624 490 L604 520 L624 550 L604 580 M624 280 L604 310 L624 340 L604 370 L624 400 L604 430 L624 460 L604 490 L624 520 L604 550"/>
  <path d="M676 255 L676 588 M700 255 L700 588 M738 255 L738 588 M756 255 L756 588 M676 300 L700 350 L676 400 L700 450 L676 500 M700 300 L676 350 L700 400 L676 450 M738 300 L756 350 L738 400 L756 450 L738 500 M756 300 L738 350 L756 400 L738 450"/>
 </g>
 <g stroke="#7c8c9c" stroke-opacity="0.32" stroke-width="1.500" fill="none">
  <path d="M601 255 L601 588 M610 255 L610 588 M627 255 L627 588 M601 270 L627 300 L601 330 L627 360 L601 390 L627 420 L601 450 L627 480 L601 510 L627 540 L601 570 M597 300 L632 300 M597 360 L632 360 M597 420 L632 420 M597 480 L632 480 M597 540 L632 540 M682 255 L682 588 M744 255 L744 588"/>
 </g>
 </g>
 <!-- RSTAB -->
 <g opacity="0.72"><text transform="translate(699,308.700) rotate(-90)" font-family="Liberation Sans" font-weight="bold" font-size="71" fill="url(#gTx)" stroke="url(#gTx)" stroke-width="2.500" stroke-linejoin="round" textLength="254" lengthAdjust="spacingAndGlyphs">RSTAB</text></g>
 <g clip-path="url(#cBlue)"><text transform="translate(699,308.700) rotate(-90)" font-family="Liberation Sans" font-weight="bold" font-size="71" fill="#d4e8f2" stroke="#d4e8f2" stroke-width="2.500" stroke-linejoin="round" textLength="254" lengthAdjust="spacingAndGlyphs">RSTAB</text></g>
 <!-- SUPER-LK -->
 <text transform="translate(645.3,326.4) rotate(-90)" font-family="Liberation Sans" font-weight="bold" font-size="38" fill="#1b3392" stroke="#1b3392" stroke-width="1.700" stroke-linejoin="round" textLength="222" lengthAdjust="spacingAndGlyphs">SUPER-LK</text>
 <!-- description -->
 <g font-family="Liberation Sans" font-weight="bold" font-size="10.5" fill="#1c1c1c">
  <text x="616" y="377" textLength="86" lengthAdjust="spacingAndGlyphs">Überlagerung der</text>
  <text x="616" y="392" textLength="131" lengthAdjust="spacingAndGlyphs">Ergebnisse verschiedener</text>
  <text x="616" y="406.5" textLength="133" lengthAdjust="spacingAndGlyphs">Positionen (Bauzustände)</text>
 </g>
 <!-- logo -->
 <rect x="614" y="480" width="84" height="54" fill="#1f1f78"/>
 <rect x="614" y="512" width="84" height="7" fill="#fff"/>
 <rect x="640" y="483" width="4" height="48" fill="#fff"/>
 <path d="M640 486 L618 511 M644 486 L665 511 M645 486 L688 511" stroke="#fff" stroke-width="1.3" fill="none"/>
 </g>
</svg>
</div>
<div class="a " style="left:11px;top:596px;width:758px;height:1px;background:#a3a2a8;"></div>
<div class="a " style="left:11px;top:597px;width:758px;height:1px;background:#fff;"></div>
<div class="a btn " style="left:12px;top:609px;width:25px;height:20px;line-height:18px;"><svg width="23" height="18" viewBox="0 0 23 18" style="position:absolute;left:0;top:0"><ellipse cx="11" cy="8" rx="6.5" ry="6" fill="#f2f2f6" stroke="#8a8ca6" stroke-width="1.2"/><path d="M6 12 L4 16 L9 13.5 Z" fill="#f2f2f6" stroke="#8a8ca6" stroke-width="0.8"/><text x="11" y="12" font-family="Liberation Sans" font-weight="bold" font-size="10" text-anchor="middle" fill="#2a2f8c">?</text></svg></div>
<div class="a btn " style="left:612px;top:609px;width:73px;height:21px;line-height:19px;box-shadow:inset 0 0 0 1px #c2d6f6, inset 0 0 0 2px #a4c0ee;">OK</div>
<div class="a btn " style="left:694px;top:609px;width:73px;height:21px;line-height:19px;">Abbrechen</div>
</div>
</body>
</html>
